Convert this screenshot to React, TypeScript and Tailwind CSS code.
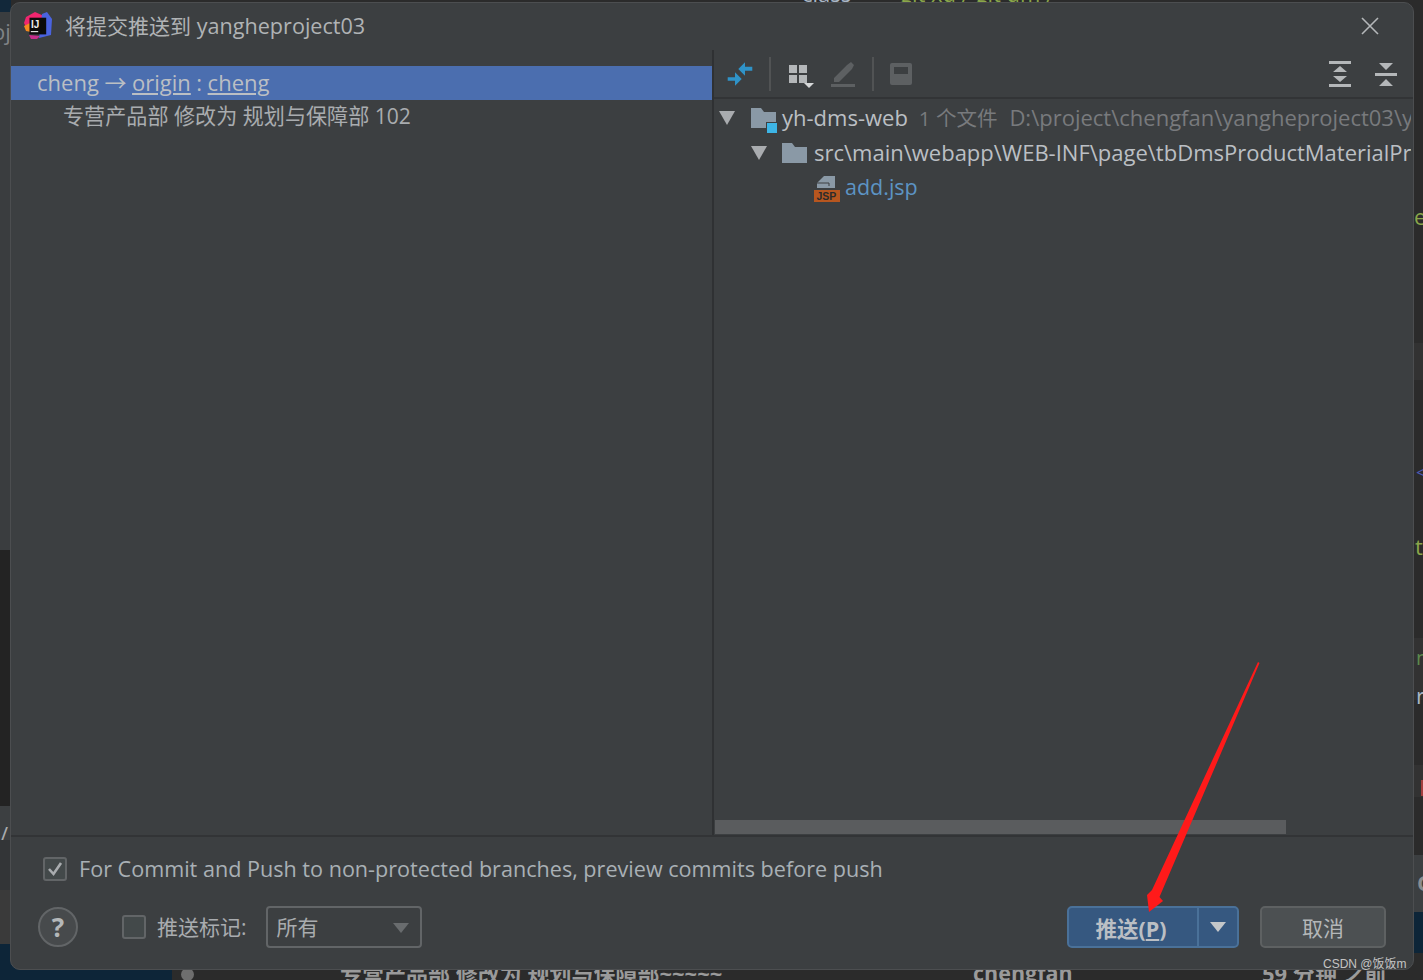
const font = { fontFamily: '"Open Sans","Noto Sans CJK SC",sans-serif' };

function Logo() {
  return (
    <svg width="30" height="30" viewBox="0 0 30 30" className="shrink-0">
      <path d="M1 12 L3 6 L12 1 L21 5 L9 18 L3 16 Z" fill="#f0266f" />
      <path d="M19 3 L24 1 L29 8 L28 24 L16 27 Z" fill="#4a63e0" />
      <path d="M1 15 L7 12 L8 21 L3 20 Z" fill="#f58a1f" />
      <path d="M6 24 L17 25 L14 28 L8 28 Z" fill="#c72c8c" />
      <rect x="6.5" y="6.7" width="16.7" height="16.7" fill="#0b0b0b" />
      <rect x="7.8" y="20" width="7.4" height="1.2" fill="#ddd" />
      <text x="8" y="16.5" fill="#eee" fontSize="10" fontWeight="700" fontFamily="Liberation Sans">IJ</text>
    </svg>
  );
}

function Folder({ small }: { small?: boolean }) {
  return (
    <svg width="28" height="26" viewBox="0 0 28 26" className="shrink-0 overflow-visible">
      <path d="M1 3 H11 L14 7 H26 V23 H1 Z" fill="#8a99a6" />
      {small && <rect x="16.5" y="17.5" width="11" height="11" fill="#3db5e6" stroke="#3c3f41" strokeWidth="1" />}
    </svg>
  );
}

function Tri() {
  return (
    <svg width="16" height="14" viewBox="0 0 16 14" className="shrink-0">
      <path d="M0 0 H16 L8 14 Z" fill="#a9acaf" />
    </svg>
  );
}

function Sep() {
  return <div className="w-[2px] h-[34px] bg-[#515354]" />;
}

export default function App() {
  return (
    <div className="relative w-[1423px] h-[980px] overflow-hidden bg-[#2b2b2b]" style={font}>
      {/* Window behind the dialog: left edge */}
      <div className="absolute left-0 top-0 w-[11px] h-[12px] bg-[#12283a]" />
      <div className="absolute left-0 top-[12px] w-[11px] h-[538px] bg-[#3a3d3f]" />
      <div className="absolute left-[-8px] top-[15px] text-[22px] leading-[32px] text-[#808386] whitespace-nowrap">oj</div>
      <div className="absolute left-0 top-[550px] w-[11px] h-[256px] bg-[#232323]" />
      <div className="absolute left-0 top-[806px] w-[11px] h-[34px] bg-[#3c3f41]" />
      <div className="absolute left-0 top-[819px] text-[22px] leading-[30px] text-[#a9acaf]">/</div>
      <div className="absolute left-0 top-[840px] w-[11px] h-[50px] bg-[#333537]" />
      <div className="absolute left-0 top-[890px] w-[11px] h-[54px] bg-[#3a3a3a]" />
      <div className="absolute left-0 top-[944px] w-[172px] h-[36px] bg-[#0d2538]" />

      {/* Top edge fragments */}
      <div className="absolute left-[802px] top-[-17px] text-[22px] leading-[20px] text-[#a9b7c6] whitespace-nowrap">class</div>
      <div className="absolute left-[900px] top-[-17px] text-[22px] leading-[20px] text-[#8aa64a] whitespace-nowrap">git xd / git dm /</div>

      {/* Bottom edge fragments */}
      <div className="absolute left-[172px] top-[968px] w-[1251px] h-[12px] bg-[#2b2b2b]" />
      <div className="absolute left-[181px] top-[968px] w-[13px] h-[13px] rounded-full bg-[#6e6e6e]" />
      <div className="absolute left-[340px] top-[959px] text-[22px] leading-[28px] font-bold text-[#9a9a9a] whitespace-nowrap">专营产品部 修改为 规划与保障部~~~~~</div>
      <div className="absolute left-[973px] top-[959px] text-[21.5px] leading-[28px] font-bold text-[#9a9a9a] whitespace-nowrap">chengfan</div>
      <div className="absolute left-[1262px] top-[959px] text-[22px] leading-[28px] font-bold text-[#9a9a9a] whitespace-nowrap">59 分钟 之前</div>

      {/* Right edge fragments */}
      <div className="absolute left-[1413px] top-[343px] w-[10px] h-[37px] bg-[#323232]" />
      <div className="absolute left-[1413px] top-[638px] w-[10px] h-[62px] bg-[#323232]" />
      <div className="absolute left-[1413px] top-[765px] w-[10px] h-[32px] bg-[#323232]" />
      <div className="absolute left-[1413px] top-[855px] w-[10px] h-[57px] bg-[#3c3f41]" />
      <div className="absolute left-[1413px] top-[912px] w-[10px] h-[41px] bg-[#0d2538]" />
      <div className="absolute left-[1414px] top-[204px] text-[22px] leading-[24px] text-[#8aa64a]">e</div>
      <div className="absolute left-[1416px] top-[460px] text-[18px] leading-[24px] text-[#4b59b5]">&lt;</div>
      <div className="absolute left-[1415px] top-[534px] text-[22px] leading-[24px] text-[#8aa64a]">t</div>
      <div className="absolute left-[1416px] top-[646px] text-[20px] leading-[24px] text-[#5d8a4d]">n</div>
      <div className="absolute left-[1416px] top-[683px] text-[22px] leading-[24px] text-[#a9b7c6]">r</div>
      <div className="absolute left-[1421px] top-[780px] w-[2px] h-[16px] bg-[#a33f3f]" />
      <div className="absolute left-[1417px] top-[870px] text-[22px] font-bold leading-[24px] text-[#8a8d90]">C</div>

      {/* Dialog */}
      <div className="absolute left-[10px] top-[2px] w-[1404px] h-[968px] rounded-[10px] bg-[#3c3f41] border border-[#4c4e50] flex flex-col overflow-hidden text-[#a9acaf] text-[22px]">
        <div className="h-[47px] shrink-0 flex items-center pl-[12px] pr-[33px] pb-[2px]">
          <Logo />
          <span className="ml-[12px] leading-[28px] whitespace-nowrap text-[#b0b3b5]">
            <span className="text-[21px]">将提交推送到</span> <span className="text-[21.6px]">yangheproject03</span>
          </span>
          <svg width="18" height="18" viewBox="0 0 18 18" className="ml-auto mr-[1px]">
            <path d="M1 1 L17 17 M17 1 L1 17" stroke="#b4b7b9" strokeWidth="1.6" />
          </svg>
        </div>

        <div className="flex-1 flex min-h-0">
          <div className="w-[701px] shrink-0 pt-[16px]">
            <div className="h-[34px] bg-[#4b6eaf] pl-[26px] pb-[2px] flex items-center whitespace-nowrap text-[#bbbfc4]">
              cheng → <span className="underline mx-[5.5px]">origin</span> : <span className="underline ml-[5.5px]">cheng</span>
            </div>
            <div className="h-[34px] pl-[52px] pb-[2px] flex items-center whitespace-nowrap text-[21.1px] text-[#a9acaf]">专营产品部 修改为 规划与保障部 102</div>
          </div>
          <div className="w-[2px] bg-[#2f3133] shrink-0" />
          <div className="flex-1 min-w-0 flex flex-col">
            <div className="h-[49px] shrink-0 border-b-2 border-[#323436] flex items-center pl-[12px] pr-[16px]">
              <svg width="28" height="28" viewBox="0 0 28 28" className="shrink-0">
                <path d="M12.3 9 L19 2.3 V6.7 H26.3 V10.7 H19 V15.7 Z M15.7 19 L9 12.3 V17.3 H1.7 V20.7 H9 V25.7 Z" fill="#2f93c8" />
              </svg>
              <div className="ml-[15px]"><Sep /></div>
              <svg width="26" height="28" viewBox="0 0 26 28" className="ml-[17px] shrink-0">
                <path d="M1 5 H9 V13 H1 Z M11 5 H19 V13 H11 Z M1 15 H9 V23 H1 Z M11 15 H19 V23 H11 Z" fill="#b4b7b9" />
                <path d="M16 23 H26 L21 28 Z" fill="#d6d8d9" />
              </svg>
              <svg width="28" height="28" viewBox="0 0 28 28" className="ml-[14px] shrink-0">
                <path d="M6 18 L19 5 L23 2 L26 5 L24 9 L11 22 H6 Z M3 24 H27 V27 H3 Z" fill="#5d6062" />
              </svg>
              <div className="ml-[16px]"><Sep /></div>
              <svg width="22" height="22" viewBox="0 0 22 22" className="ml-[16px] shrink-0">
                <rect x="0" y="0" width="22" height="22" rx="2" fill="#5d6062" />
                <rect x="4" y="4" width="14" height="7" fill="#3c3f41" />
              </svg>
              <svg width="22" height="26" viewBox="0 0 22 26" className="ml-auto">
                <path d="M0 0 H22 V3 H0 Z M0 23 H22 V26 H0 Z M11 5 L18 11 H4 Z M4 15 H18 L11 21 Z" fill="#b4b7b9" />
              </svg>
              <svg width="22" height="24" viewBox="0 0 22 24" className="ml-[24px]">
                <path d="M0 11 H22 V14 H0 Z M4 1 H18 L11 8 Z M11 17 L18 24 H4 Z" fill="#b4b7b9" />
              </svg>
            </div>
            <div className="flex-1 min-h-0 overflow-hidden whitespace-nowrap relative mr-[2px]">
              <div className="h-[35px] mt-[1px] flex items-center pl-[5px]">
                <Tri />
                <span className="ml-[15px]"><Folder small /></span>
                <span className="ml-[4px] text-[#bbbfc4]">yh-dms-web</span>
                <span className="ml-[11px] text-[#787a7d]">
                  <span className="text-[20.5px]">1 个文件</span>
                  <span className="ml-[12px]">D:\project\chengfan\yangheproject03\yangheproject03</span>
                </span>
              </div>
              <div className="h-[35px] flex items-center pl-[37px]">
                <Tri />
                <span className="ml-[14px]"><Folder /></span>
                <span className="ml-[5px] text-[#bbbfc4]">src\main\webapp\WEB-INF\page\tbDmsProductMaterialProduct</span>
              </div>
              <div className="h-[35px] flex items-center pl-[100px]">
                <svg width="26" height="28" viewBox="0 0 26 28" className="shrink-0">
                  <path d="M10 2 H21 V14 H3 V9 Z" fill="#8a99a6" />
                  <path d="M3 9 H15 V12" fill="none" stroke="#3c3f41" strokeWidth="1" />
                  <rect x="0" y="16" width="26" height="12" fill="#b7561f" />
                  <text x="2.5" y="26" fontSize="10.5" fontWeight="700" fill="#2b2b2b" fontFamily="Liberation Sans">JSP</text>
                </svg>
                <span className="ml-[5px] text-[21.5px] text-[#5c94c4]">add.jsp</span>
              </div>
              <div className="absolute left-[1px] right-[0px] bottom-[1px] h-[14px]">
                <div className="w-[571px] h-[14px] bg-[#5a5c5e]" />
              </div>
            </div>
          </div>
        </div>

        <div className="h-[134px] shrink-0 border-t-2 border-[#323436] pl-[27px] pr-[27px] flex flex-col">
          <div className="h-[60px] shrink-0 flex items-center pl-[5px] pt-[4px]">
            <div className="w-[24px] h-[24px] rounded-[3px] border-2 border-[#626567] bg-[#43494a] flex items-center justify-center">
              <svg width="16" height="16" viewBox="0 0 16 16"><path d="M2 8 L6.5 13 L14 2" fill="none" stroke="#a9acaf" strokeWidth="2.6" /></svg>
            </div>
            <span className="ml-[12px] whitespace-nowrap text-[21.6px] text-[#a9b0b5]">For Commit and Push to non-protected branches, preview commits before push</span>
          </div>
          <div className="flex items-center h-[44px] mt-[8px]">
            <div className="w-[40px] h-[40px] rounded-full border-2 border-[#626567] bg-[#474a4c] flex items-center justify-center text-[26px] font-bold text-[#b4b7b9] leading-none">?</div>
            <div className="ml-[44px] w-[24px] h-[24px] rounded-[3px] border-2 border-[#626567] bg-[#43494a]" />
            <span className="ml-[11px] whitespace-nowrap text-[21px] pt-[2px] text-[#a9acaf]">推送标记:</span>
            <div className="ml-[19px] w-[156px] h-[42px] rounded-[4px] border-2 border-[#626567] flex items-center pl-[9px] pr-[11px] pt-[2px]">
              <span className="text-[21px] text-[#a9acaf]">所有</span>
              <svg width="16" height="10" viewBox="0 0 16 10" className="ml-auto"><path d="M0 0 H16 L8 10 Z" fill="#696c6e" /></svg>
            </div>
            <div className="ml-auto flex items-stretch h-[42px] rounded-[5px] border-2 border-[#4a7199] bg-[#365880] w-[172px]">
              <div className="w-[130px] flex items-center justify-center font-bold text-[21.5px] pt-[4px] pr-[4px] text-[#bbbfc4] border-r-2 border-[#4a7199]">推送(<span className="underline">P</span>)</div>
              <div className="flex-1 flex items-center justify-center">
                <svg width="16" height="10" viewBox="0 0 16 10"><path d="M0 0 H16 L8 10 Z" fill="#c4c7c9" /></svg>
              </div>
            </div>
            <div className="ml-[21px] w-[126px] h-[42px] rounded-[5px] border-2 border-[#5e6162] bg-[#4c5052] flex items-center justify-center pt-[4px] text-[21px] text-[#b4b7b9]">取消</div>
          </div>
        </div>
      </div>

      {/* Red arrow annotation */}
      <svg width="140" height="270" viewBox="0 0 140 270" className="absolute left-[1140px] top-[655px]">
        <path d="M118 7 L119.5 8 L19.5 242 L23 246 L9 257 L7 240 L12 235 Z" fill="#ff1a1a" />
      </svg>

      <div className="absolute left-[1323px] top-[956px] text-[12px] leading-[16px] text-[#c4c4c4] whitespace-nowrap" style={{ fontFamily: '"Liberation Sans","Noto Sans CJK SC",sans-serif' }}>CSDN @饭饭m</div>
    </div>
  );
}
